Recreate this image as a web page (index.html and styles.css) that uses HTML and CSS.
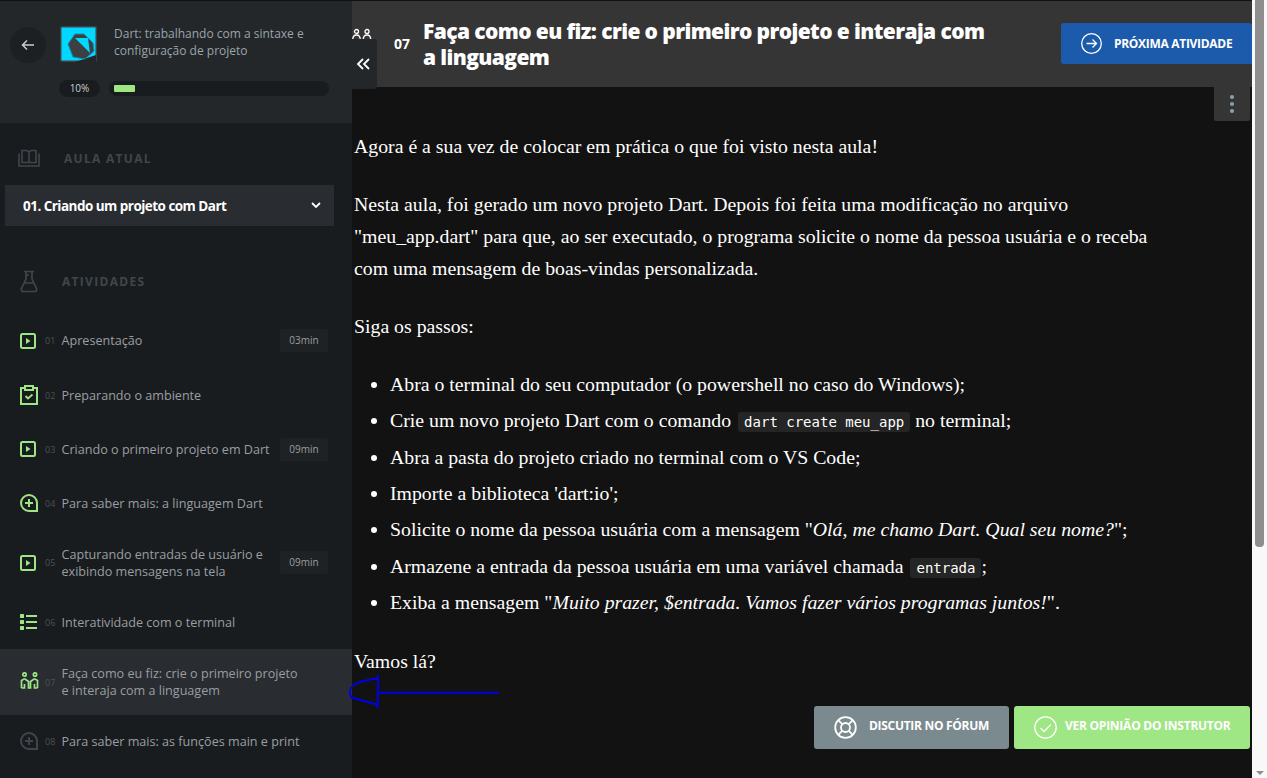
FILE: index.html
```html
<!DOCTYPE html>
<html lang="pt-BR">
<head>
<meta charset="utf-8">
<title>Faça como eu fiz</title>
<link rel="stylesheet" href="styles.css">
</head>
<body>
<div class="app">
  <aside class="sidebar">
    <div class="course">
      <div class="course-top">
        <button class="back" aria-label="Voltar"><svg width="14" height="12" viewBox="0 0 14 12"><path d="M13 6H2M6 1.5 1.5 6 6 10.5" fill="none" stroke="#c8cccf" stroke-width="1.5"/></svg></button>
        <svg class="logo" width="37" height="37" viewBox="0 0 37 37"><rect x="0" y="0" width="37" height="36" rx="2" fill="#3f4245"/><rect x="1.500" y="1.500" width="34" height="33" fill="#00d8ff"/><path d="M15 36l21-7v7z" fill="#24272a"/><path d="M8 18l7-10h9l9 9 1 8-9 8-12-2z" fill="#3d4042" stroke="#0b8fa8" stroke-width="1"/><path d="M15 12h13l2 15z" fill="#00d8ff"/></svg>
        <p class="course-title">Dart: trabalhando com a sintaxe e configuração de projeto</p>
      </div>
      <div class="progress-row">
        <span class="pct">10%</span>
        <span class="track"><span class="fill" style="width:21px"></span></span>
      </div>
    </div>
    <div class="section-head lesson-head">
      <svg width="22" height="18" viewBox="0 0 22 18" fill="none" stroke="#3f464b" stroke-width="1.600"><path d="M4 1.500h5l2 1.500 2-1.500h5v12H4zM11 3v10.500M1 4.500V17h20V4.500"/></svg>
      <span>AULA ATUAL</span>
    </div>
    <div class="lesson-select"><strong>01. Criando um projeto com Dart</strong><svg width="10" height="7" viewBox="0 0 10 7"><path d="M1 1l4 4 4-4" fill="none" stroke="#fff" stroke-width="1.800"/></svg></div>
    <div class="section-head act-head">
      <svg width="18" height="23" viewBox="0 0 18 23" fill="none" stroke="#3f464b" stroke-width="1.700"><path d="M4 1.500h10M6 1.500V9L1.500 18.500c-.6 1.800.4 3 2 3h11c1.600 0 2.600-1.200 2-3L12 9V1.500M6 5h3M5 13h8"/></svg>
      <span>ATIVIDADES</span>
    </div>
    <ul class="activities">
      <li class="item i1">
        <svg class="ic" width="16" height="16" viewBox="0 0 16 16"><rect x="1" y="1" width="14" height="14" rx="1.500" fill="none" stroke="#9de683" stroke-width="2"/><path d="M6 5l4.500 3L6 11z" fill="#9de683"/></svg>
        <span class="num">01</span><span class="name">Apresentação</span><span class="dur">03min</span>
      </li>
      <li class="item i2">
        <svg class="ic" width="18" height="20" viewBox="0 0 18 20" fill="none" stroke="#9de683" stroke-width="2"><path d="M5 3H1v16h16V3h-4M5 1h8v4H5z"/><path d="M5.500 11l2.500 2.500 4.500-4" stroke-width="1.800"/></svg>
        <span class="num">02</span><span class="name">Preparando o ambiente</span>
      </li>
      <li class="item i3">
        <svg class="ic" width="16" height="16" viewBox="0 0 16 16"><rect x="1" y="1" width="14" height="14" rx="1.500" fill="none" stroke="#9de683" stroke-width="2"/><path d="M6 5l4.500 3L6 11z" fill="#9de683"/></svg>
        <span class="num">03</span><span class="name">Criando o primeiro projeto em Dart</span><span class="dur">09min</span>
      </li>
      <li class="item i4">
        <svg class="ic" width="18" height="18" viewBox="0 0 18 18" fill="none" stroke="#9de683" stroke-width="2"><path d="M17 17h-8a8 8 0 1 1 8-8z"/><path d="M9 5v8M5 9h8"/></svg>
        <span class="num">04</span><span class="name">Para saber mais: a linguagem Dart</span>
      </li>
      <li class="item i5">
        <svg class="ic" width="16" height="16" viewBox="0 0 16 16"><rect x="1" y="1" width="14" height="14" rx="1.500" fill="none" stroke="#9de683" stroke-width="2"/><path d="M6 5l4.500 3L6 11z" fill="#9de683"/></svg>
        <span class="num">05</span><span class="name">Capturando entradas de usuário e<br>exibindo mensagens na tela</span><span class="dur">09min</span>
      </li>
      <li class="item i6">
        <svg class="ic" width="17" height="16" viewBox="0 0 17 16" fill="#9de683"><rect x="0" y="0" width="4" height="4" rx=".5"/><rect x="0" y="6" width="4" height="4" rx=".5"/><rect x="0" y="12" width="4" height="4" rx=".5"/><rect x="6" y="1" width="11" height="2"/><rect x="6" y="7" width="11" height="2"/><rect x="6" y="13" width="11" height="2"/></svg>
        <span class="num">06</span><span class="name">Interatividade com o terminal</span>
      </li>
      <li class="item i7 current">
        <svg class="ic people" width="19" height="17" viewBox="0 0 19 17" fill="none" stroke="#9de683" stroke-width="1.700"><circle cx="4.500" cy="2.500" r="1.700"/><circle cx="15" cy="2.500" r="1.700"/><path d="M1.500 16V8.500L4 7h1l3.500 2.500V16h2V9.500L14 7h1l2.500 1.500V16M1.500 16h3v-4M17.500 16h-3v-4"/></svg>
        <span class="num">07</span><span class="name">Faça como eu fiz: crie o primeiro projeto<br>e interaja com a linguagem</span>
      </li>
      <li class="item i8">
        <svg class="ic" width="18" height="18" viewBox="0 0 18 18" fill="none" stroke="#3f464b" stroke-width="2"><path d="M17 17h-8a8 8 0 1 1 8-8z"/><path d="M9 5v8M5 9h8"/></svg>
        <span class="num">08</span><span class="name">Para saber mais: as funções main e print</span>
      </li>
    </ul>
  </aside>

  <main class="main">
    <header class="topbar">
      <span class="t-num">07</span>
      <h1>Faça como eu fiz: crie o primeiro projeto e interaja com a linguagem</h1>
      <a class="next"><svg width="21" height="21" viewBox="0 0 21 21" fill="none" stroke="#fff" stroke-width="1.300"><circle cx="10.500" cy="10.500" r="9.800"/><path d="M5.500 10.500h10M11.500 6.500l4 4-4 4"/></svg><span>PRÓXIMA ATIVIDADE</span></a>
    </header>
    <div class="menu-row"><button class="dots" aria-label="Mais"><i></i><i></i><i></i></button></div>
    <article class="content">
      <p>Agora é a sua vez de colocar em prática o que foi visto nesta aula!</p>
      <p>Nesta aula, foi gerado um novo projeto Dart. Depois foi feita uma modificação no arquivo "meu_app.dart" para que, ao ser executado, o programa solicite o nome da pessoa usuária e o receba com uma mensagem de boas-vindas personalizada.</p>
      <p>Siga os passos:</p>
      <ul>
        <li>Abra o terminal do seu computador (o powershell no caso do Windows);</li>
        <li>Crie um novo projeto Dart com o comando <code>dart create meu_app</code> no terminal;</li>
        <li>Abra a pasta do projeto criado no terminal com o VS Code;</li>
        <li>Importe a biblioteca 'dart:io';</li>
        <li>Solicite o nome da pessoa usuária com a mensagem "<em>Olá, me chamo Dart. Qual seu nome?</em>";</li>
        <li>Armazene a entrada da pessoa usuária em uma variável chamada <code>entrada</code>;</li>
        <li>Exiba a mensagem "<em>Muito prazer, $entrada. Vamos fazer vários programas juntos!</em>".</li>
      </ul>
      <p>Vamos lá?</p>
    </article>
    <div class="actions">
      <a class="act forum"><svg width="23" height="23" viewBox="0 0 23 23" fill="none" stroke="#fff" stroke-width="1.800"><circle cx="11.500" cy="11.500" r="10.300"/><circle cx="11.500" cy="11.500" r="4.500"/><path d="M4.200 4.200l4 4M18.800 4.200l-4 4M4.200 18.800l4-4M18.800 18.800l-4-4"/></svg><span>DISCUTIR NO FÓRUM</span></a>
      <a class="act opinion"><svg width="23" height="23" viewBox="0 0 23 23" fill="none" stroke="#fff" stroke-width="1.300"><circle cx="11.500" cy="11.500" r="10.700"/><path d="M6.500 12l3.500 3.500 7-7"/></svg><span>VER OPINIÃO DO INSTRUTOR</span></a>
    </div>
  </main>
  <div class="scrollbar"><span class="thumb"></span><span class="arrow-down"></span></div>
</div>
<div class="overlay-people"><svg width="20" height="12" viewBox="0 0 20 12" fill="none" stroke="#fff" stroke-width="1.300"><circle cx="4.500" cy="3.500" r="2"/><circle cx="15" cy="3.500" r="2"/><path d="M.7 12c0-3 1.500-5 3.800-5s3.800 2 3.800 5M11.200 12c0-3 1.500-5 3.800-5s3.800 2 3.800 5"/></svg></div>
<button class="collapse" aria-label="Recolher"><svg width="14" height="12" viewBox="0 0 14 12" fill="none" stroke="#fff" stroke-width="1.800"><path d="M7 1 2 6l5 5M13 1 8 6l5 5"/></svg></button>
<svg class="annot" width="155" height="36" viewBox="0 0 155 36" fill="none" stroke="#0000e6" stroke-width="2"><path d="M152 17.700H32M30.500 0c.5 2 1 5 .5 13l-.5 20M30 3.500C22 4.500 12 6 7 10 2.500 13 2 18 4 22c6 3 18 4.500 27 8"/></svg>
</body>
</html>
```
FILE: styles.css
```css
* { box-sizing: border-box; }
html, body { margin: 0; height: 100%; overflow: hidden; background: #121212; }
body { font-family: "Open Sans", sans-serif; }
.app { display: flex; height: 778px; width: 1267px; }

.sidebar { width: 352px; flex: none; background: #191c1f; height: 778px; overflow: hidden; }
.course { height: 123px; background: #24272a; box-shadow: inset 0 1px 0 #0b121a; padding: 23px 0 0 10px; }
.course-top { display: flex; align-items: center; height: 42px; }
.back { width: 36px; height: 36px; border: 0; padding: 0; border-radius: 50%; background: #1d2023; display: flex; align-items: center; justify-content: center; flex: none; margin-top: 2px; }
.logo { margin-left: 14px; flex: none; margin-top: 1px; }
.course-title { margin: -4px 0 0 17px; width: 210px; font-size: 12px; line-height: 17px; color: #9aa4ab; }
.progress-row { display: flex; align-items: center; margin: 15px 0 0 49px; gap: 9px; }
.pct { width: 41px; height: 17px; border-radius: 9px; background: #191c1f; color: #c8cccf; font-size: 10px; line-height: 17px; text-align: center; }
.track { width: 220px; height: 15px; border-radius: 8px; background: #191c1f; padding: 4px 5px; display: block; }
.fill { display: block; height: 7px; background: #9de683; border-radius: 1px; }

.section-head { display: flex; align-items: center; color: #3f464b; font-size: 12px; font-weight: 700; letter-spacing: 1.300px; }
.lesson-head { height: 30px; margin-top: 20px; padding-left: 18px; gap: 24px; }
.lesson-select { margin: 12px 18px 0 5px; height: 41px; background: #292c30; display: flex; align-items: center; justify-content: space-between; padding: 0 13px 0 18px; color: #fff; }
.lesson-select strong { font-size: 13.500px; font-weight: 700; letter-spacing: -.53px; }
.act-head { height: 30px; margin-top: 40px; padding-left: 20px; gap: 24px; }

.activities { list-style: none; margin: 17px 0 0; padding: 0; }
.item { display: flex; align-items: center; padding-left: 20px; color: #9a9ea2; font-size: 12.600px; line-height: 17px; position: relative; height: 54px; }
.i1 { height: 55px; }
.i5 { height: 65px; }
.i7 { height: 66px; }
.i8 { height: 52px; }
.current { background: #292c30; }
.ic { flex: none; }
.people { margin-top: -3px; }
.num { position: absolute; left: 45px; font-size: 9px; color: #4b5156; }
.name { position: absolute; left: 61.500px; white-space: nowrap; }
.dur { position: absolute; left: 280px; width: 48px; height: 23px; line-height: 23px; text-align: center; background: #1f2225; font-size: 10px; color: #9a9ea2; border-radius: 2px; }

.main { width: 900px; flex: none; display: flex; flex-direction: column; position: relative; }
.topbar { height: 87px; background: #353535; box-shadow: inset 0 1px 0 #0b121a; display: flex; align-items: center; padding-left: 42px; flex: none; }
.t-num { color: #fff; font-weight: 700; font-size: 14px; width: 29px; flex: none; }
.topbar h1 { margin: 0; width: 575px; color: #fff; font-size: 21px; line-height: 26px; font-weight: 800; letter-spacing: -.6px; }
.next { margin-left: auto; width: 191px; height: 41px; background: #1c5aab; border-radius: 3px 3px 0 3px; display: flex; align-items: center; gap: 12px; padding-left: 20px; color: #fff; font-size: 12px; font-weight: 700; letter-spacing: -.3px; }
.menu-row { display: flex; justify-content: flex-end; padding-right: 2px; height: 0; }
.dots { width: 36px; height: 34px; border: 0; padding: 0; background: #353535; border-radius: 0 0 2px 2px; display: flex; flex-direction: column; align-items: center; justify-content: center; gap: 3px; flex: none; }
.dots i { width: 4px; height: 4px; border-radius: 50%; background: #8fa0a8; display: block; }

.content { padding: 43px 0 0 2px; width: 810px; color: #fff; font-family: "Liberation Serif", serif; font-size: 19.800px; line-height: 32px; }
.content p { margin: 0 0 26px; }
.content ul { margin: 0 0 27.200px; padding-left: 36px; }
.content li { line-height: 32px; margin-bottom: 4.330px; }
code { font-family: "DejaVu Sans Mono", monospace; font-size: 14px; line-height: 1; background: #252525; padding: 2px 6px; border-radius: 3px; margin-left: 2px; }

.actions { position: absolute; right: 2px; top: 706px; display: flex; gap: 5px; }
.act { height: 43px; border-radius: 3px; display: flex; align-items: center; color: #fff; font-size: 12px; font-weight: 700; }
.act span { margin-bottom: 4px; }
.forum { width: 195px; background: #7b8a8f; padding-left: 20px; gap: 12px; letter-spacing: -.3px; }
.opinion { width: 236px; background: #9fe685; padding-left: 20px; gap: 8px; letter-spacing: -.25px; }

.scrollbar { width: 15px; flex: none; background: #f8f8f8; position: relative; padding-left: 3px; }
.thumb { display: block; width: 9px; height: 547px; background: #8e8e8e; border-radius: 0 0 4px 4px; }
.arrow-down { position: absolute; left: 4px; bottom: 3px; width: 0; height: 0; border-left: 4px solid transparent; border-right: 4px solid transparent; border-top: 4px solid #8e8e8e; }

.overlay-people { position: absolute; left: 352px; top: 28px; line-height: 0; }
.collapse { position: absolute; left: 352px; top: 39px; width: 25px; height: 50px; border: 0; padding: 0 4px 0 0; background: #24272a; border-radius: 0 3px 3px 0; display: flex; align-items: center; justify-content: center; }
.annot { position: absolute; left: 347px; top: 675px; }
```
